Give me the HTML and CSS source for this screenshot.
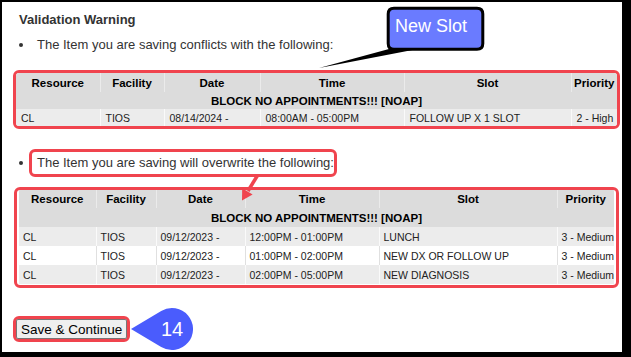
FILE: index.html
```html
<!DOCTYPE html>
<html>

	<head>
		<meta charset="utf-8">
		<title>Validation Warning</title>
		<link rel="stylesheet" href="styles.css">
	</head>

	<body>
		<section class="warning">
			<h3>Validation Warning</h3>

			<ul class="msgs">
				<li>
					<p class="msg">The Item you are saving conflicts with the following:</p>
					<div class="mark mark-tbl tbl-a">
						<table class="grid conflicts">
							<colgroup>
								<col style="width:84px"><col style="width:64px"><col style="width:96px"><col style="width:144px"><col style="width:167px"><col style="width:46px">
							</colgroup>
							<tr class="head">
								<th>Resource</th><th>Facility</th><th>Date</th><th>Time</th><th>Slot</th><th>Priority</th>
							</tr>
							<tr class="block">
								<th colspan="6">BLOCK NO APPOINTMENTS!!! [NOAP]</th>
							</tr>
							<tr class="odd">
								<td>CL</td><td>TIOS</td><td>08/14/2024 -</td><td>08:00AM - 05:00PM</td><td>FOLLOW UP X 1 SLOT</td><td>2 - High</td>
							</tr>
						</table>
					</div>
				</li>
				<li>
					<p class="msg"><span class="mark mark-txt">The Item you are saving will overwrite the following:</span></p>
					<div class="mark mark-tbl tbl-b">
						<table class="grid overwrites">
							<colgroup>
								<col style="width:77px"><col style="width:60px"><col style="width:89px"><col style="width:134px"><col style="width:178px"><col style="width:57px">
							</colgroup>
							<tr class="head">
								<th>Resource</th><th>Facility</th><th>Date</th><th>Time</th><th>Slot</th><th>Priority</th>
							</tr>
							<tr class="block">
								<th colspan="6">BLOCK NO APPOINTMENTS!!! [NOAP]</th>
							</tr>
							<tr class="odd">
								<td>CL</td><td>TIOS</td><td>09/12/2023 -</td><td>12:00PM - 01:00PM</td><td>LUNCH</td><td>3 - Medium</td>
							</tr>
							<tr class="even">
								<td>CL</td><td>TIOS</td><td>09/12/2023 -</td><td>01:00PM - 02:00PM</td><td>NEW DX OR FOLLOW UP</td><td>3 - Medium</td>
							</tr>
							<tr class="odd">
								<td>CL</td><td>TIOS</td><td>09/12/2023 -</td><td>02:00PM - 05:00PM</td><td>NEW DIAGNOSIS</td><td>3 - Medium</td>
							</tr>
						</table>
					</div>
				</li>
			</ul>

			<div class="actions">
				<span class="mark mark-btn"><button type="button">Save &amp; Continue</button></span>
				<svg class="step" width="62" height="44" viewBox="133 307 62 44">
					<path d="M133 329 L163.2 311 A21 21 0 1 1 163.2 347 Z" fill="#4a5cfd"/>
					<text x="174" y="336" text-anchor="middle">14</text>
				</svg>
			</div>
		</section>

		<!-- annotations drawn over the page, in page coordinates -->
		<svg class="notes" width="631" height="357" viewBox="0 0 631 357">
			<polygon points="319,68 389,49 428,47" fill="#000"/>
			<path d="M394 8.2 H477 Q482.8 8.2 482.8 14 V43.4 Q482.8 49.2 477 49.2 H394 Q388.2 49.2 388.2 43.4 V14 Q388.2 8.2 394 8.2 Z" fill="#6a7bff" stroke="#000" stroke-width="3"/>
			<text class="callout-txt" x="395" y="32">New Slot</text>

			<line x1="257.5" y1="175.5" x2="248" y2="191" stroke="#f0444e" stroke-width="3.5"/>
			<polygon points="242,200.5 252.6,194.6 242.2,188.2" fill="#f0444e"/>
		</svg>
	</body>

</html>
```

FILE: styles.css
```css
html {
	background: #000;
}
body {
	margin: 2px 9px 5px 2px;
	height: 350px;
	background: #fff;
	position: relative;
	overflow: hidden;
	font-family: "Liberation Sans", Arial, sans-serif;
	color: #333;
}
* {
	box-sizing: border-box;
}
ul, li, h3, p {
	margin: 0;
	padding: 0;
	list-style: none;
}
.warning {
	padding: 0 2px 0 11px;
}
.warning h3 {
	margin: 10px 0 0 6px;
	font-size: 13px;
	line-height: 15px;
	font-weight: bold;
	color: #333;
}
.msgs {
	margin-top: 10px;
}
.msg {
	display: flex;
	align-items: center;
	font-size: 13px;
	line-height: 15px;
	white-space: nowrap;
}
.msg::before {
	content: "";
	width: 4px;
	height: 4px;
	border-radius: 50%;
	background: #333;
	margin: 0 14px 0 6px;
	flex: none;
}
.msgs li + li {
	margin-top: 20px;
}

/* red highlight boxes */
.mark {
	border: 3px solid #f0444e;
	border-radius: 6px;
}
.mark-txt {
	display: inline-block;
	margin-left: -8px;
	padding: 3px 0 4px 5px;
}
.mark-tbl {
	overflow: hidden;
}
.tbl-a {
	margin-top: 18px;
	width: 607px;
}
.tbl-b {
	margin: 10px 0 0 1px;
	width: 605px;
	padding: 0 2px 1px 2px;
}

/* grids */
.grid {
	border-collapse: collapse;
	table-layout: fixed;
	color: #000;
}
.conflicts {
	width: 601px;
}
.overwrites {
	width: 595px;
}
.grid th {
	background: #dcdcdc;
	font-size: 11.5px;
	font-weight: bold;
	text-align: center;
	white-space: nowrap;
	overflow: hidden;
	padding: 0 2px;
}
.grid .head th + th {
	border-left: 1px solid #ebebeb;
}
.grid td {
	font-size: 10.5px;
	color: #222;
	white-space: nowrap;
	overflow: hidden;
	padding: 0 0 0 4px;
}
.grid tr.odd td {
	background: #ececec;
}
.grid tr.even td {
	background: #fff;
}
.grid tr.odd td + td {
	border-left: 1px solid #fafafa;
}
.grid tr.even td + td {
	border-left: 1px solid #e0e0e0;
}
.conflicts .head th {
	height: 19px;
}
.conflicts .block th,
.conflicts td {
	height: 17px;
}
.conflicts td {
	padding-left: 5px;
}
.overwrites .head th {
	height: 18px;
}
.overwrites .block th,
.overwrites td {
	height: 19px;
}

/* save row */
.actions {
	display: flex;
	align-items: center;
	gap: 1px;
	margin-top: 19px;
}
.mark-btn {
	display: inline-flex;
}
.actions button {
	height: 20px;
	padding: 0 4px;
	margin: 0;
	font-family: "Liberation Sans", Arial, sans-serif;
	font-size: 13.5px;
	color: #000;
	background: #efefef;
	border: 1px solid #767676;
	border-radius: 2px;
}
.step {
	display: block;
	flex: none;
}
.step text {
	font-family: "Liberation Sans", Arial, sans-serif;
	font-size: 20px;
	fill: #fff;
}

/* overlay annotations */
.notes {
	position: absolute;
	left: -2px;
	top: -2px;
	pointer-events: none;
}
.callout-txt {
	font-family: "Liberation Sans", Arial, sans-serif;
	font-size: 18px;
	fill: #fff;
}
```
